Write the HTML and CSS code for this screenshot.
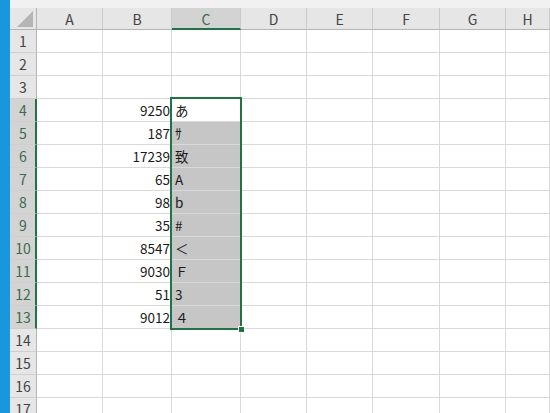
FILE: index.html
```html
<!DOCTYPE html>
<html lang="ja">
<head>
<meta charset="utf-8">
<link rel="stylesheet" href="styles.css">
</head>
<body>
<div class="app">
  <div class="edge"></div>
  <div class="sheet">
    <div class="topstrip"></div>
    <div class="grid">
      <div class="corner"><div class="tri"></div></div>
      <div class="ch">A</div><div class="ch">B</div><div class="ch on">C</div><div class="ch">D</div><div class="ch">E</div><div class="ch">F</div><div class="ch">G</div><div class="ch">H</div>

      <div class="rh">1</div><div class="c"></div><div class="c"></div><div class="c"></div><div class="c"></div><div class="c"></div><div class="c"></div><div class="c"></div><div class="c"></div>
      <div class="rh">2</div><div class="c"></div><div class="c"></div><div class="c"></div><div class="c"></div><div class="c"></div><div class="c"></div><div class="c"></div><div class="c"></div>
      <div class="rh">3</div><div class="c"></div><div class="c"></div><div class="c"></div><div class="c"></div><div class="c"></div><div class="c"></div><div class="c"></div><div class="c"></div>
      <div class="rh on">4</div><div class="c"></div><div class="c num">9250</div><div class="c txt">あ</div><div class="c"></div><div class="c"></div><div class="c"></div><div class="c"></div><div class="c"></div>
      <div class="rh on">5</div><div class="c"></div><div class="c num">187</div><div class="c txt sel">ｻ</div><div class="c"></div><div class="c"></div><div class="c"></div><div class="c"></div><div class="c"></div>
      <div class="rh on">6</div><div class="c"></div><div class="c num">17239</div><div class="c txt sel">致</div><div class="c"></div><div class="c"></div><div class="c"></div><div class="c"></div><div class="c"></div>
      <div class="rh on">7</div><div class="c"></div><div class="c num">65</div><div class="c txt sel">A</div><div class="c"></div><div class="c"></div><div class="c"></div><div class="c"></div><div class="c"></div>
      <div class="rh on">8</div><div class="c"></div><div class="c num">98</div><div class="c txt sel">b</div><div class="c"></div><div class="c"></div><div class="c"></div><div class="c"></div><div class="c"></div>
      <div class="rh on">9</div><div class="c"></div><div class="c num">35</div><div class="c txt sel">#</div><div class="c"></div><div class="c"></div><div class="c"></div><div class="c"></div><div class="c"></div>
      <div class="rh on">10</div><div class="c"></div><div class="c num">8547</div><div class="c txt sel">＜</div><div class="c"></div><div class="c"></div><div class="c"></div><div class="c"></div><div class="c"></div>
      <div class="rh on">11</div><div class="c"></div><div class="c num">9030</div><div class="c txt sel">Ｆ</div><div class="c"></div><div class="c"></div><div class="c"></div><div class="c"></div><div class="c"></div>
      <div class="rh on">12</div><div class="c"></div><div class="c num">51</div><div class="c txt sel">3</div><div class="c"></div><div class="c"></div><div class="c"></div><div class="c"></div><div class="c"></div>
      <div class="rh on">13</div><div class="c"></div><div class="c num">9012</div><div class="c txt sel">４</div><div class="c"></div><div class="c"></div><div class="c"></div><div class="c"></div><div class="c"></div>
      <div class="rh">14</div><div class="c"></div><div class="c"></div><div class="c"></div><div class="c"></div><div class="c"></div><div class="c"></div><div class="c"></div><div class="c"></div>
      <div class="rh">15</div><div class="c"></div><div class="c"></div><div class="c"></div><div class="c"></div><div class="c"></div><div class="c"></div><div class="c"></div><div class="c"></div>
      <div class="rh">16</div><div class="c"></div><div class="c"></div><div class="c"></div><div class="c"></div><div class="c"></div><div class="c"></div><div class="c"></div><div class="c"></div>
      <div class="rh">17</div><div class="c"></div><div class="c"></div><div class="c"></div><div class="c"></div><div class="c"></div><div class="c"></div><div class="c"></div><div class="c"></div>

      <div class="selbox"><div class="handle"></div></div>
    </div>
  </div>
</div>
</body>
</html>
```

FILE: styles.css
```css
html, body {
  margin: 0;
  padding: 0;
  width: 550px;
  height: 413px;
  overflow: hidden;
  background: #ffffff;
}

.app {
  display: flex;
  width: 550px;
  height: 413px;
  overflow: hidden;
  font-family: "Noto Sans CJK JP", "Liberation Sans", sans-serif;
}

.edge {
  flex: 0 0 10px;
  background: #1997dd;
}

.sheet {
  flex: 1;
  display: flex;
  flex-direction: column;
  overflow: hidden;
}

.topstrip {
  flex: 0 0 8px;
  background: #f1f1f1;
}

.grid {
  display: grid;
  grid-template-columns: 27px 66px 69px 69px 66px 66px 67px 66px 1fr;
  grid-template-rows: 22px repeat(17, 23px);
  position: relative;
  flex: 0 0 auto;
}

.grid > div {
  box-sizing: border-box;
}

.corner {
  background: #e6e6e6;
  border-right: 1px solid #b4b4b4;
  border-bottom: 1px solid #b4b4b4;
  display: flex;
  justify-content: flex-end;
  align-items: flex-end;
  padding: 0 3px 2px 0;
}

.tri {
  width: 16px;
  height: 16px;
  background: #b5b5b5;
  clip-path: polygon(100% 0, 100% 100%, 0 100%);
}

.ch {
  background: #e6e6e6;
  border-right: 1px solid #cacaca;
  border-bottom: 1px solid #b4b4b4;
  color: #444444;
  font-size: 14px;
  display: flex;
  align-items: center;
  justify-content: center;
  padding-top: 1px;
}

.ch.on {
  background: #d3d3d3;
  border-bottom: 2px solid #217346;
  color: #3d6a50;
}

.rh {
  background: #e6e6e6;
  border-right: 1px solid #b4b4b4;
  border-bottom: 1px solid #cfcfcf;
  color: #444444;
  font-size: 14px;
  display: flex;
  align-items: center;
  justify-content: center;
}

.rh.on {
  background: #d3d3d3;
  border-right: 2px solid #217346;
  color: #3d6a50;
  padding-left: 1px;
}

.c {
  border-right: 1px solid #d9d9d9;
  border-bottom: 1px solid #d9d9d9;
  font-size: 13.5px;
  color: #1a1a1a;
  display: flex;
  align-items: center;
  white-space: nowrap;
  overflow: hidden;
}

.num {
  justify-content: flex-end;
  padding-right: 1px;
}

.txt {
  padding-left: 3px;
}

.sel {
  background: #c6c6c6;
}

.selbox {
  position: absolute;
  grid-column: 4 / 5;
  grid-row: 5 / 15;
  top: -2px;
  left: -2px;
  right: -1px;
  bottom: -1px;
  border: 2px solid #217346;
  pointer-events: none;
}

.handle {
  position: absolute;
  right: -5px;
  bottom: -5px;
  width: 5px;
  height: 5px;
  background: #217346;
  border: 1px solid #ffffff;
}
```
